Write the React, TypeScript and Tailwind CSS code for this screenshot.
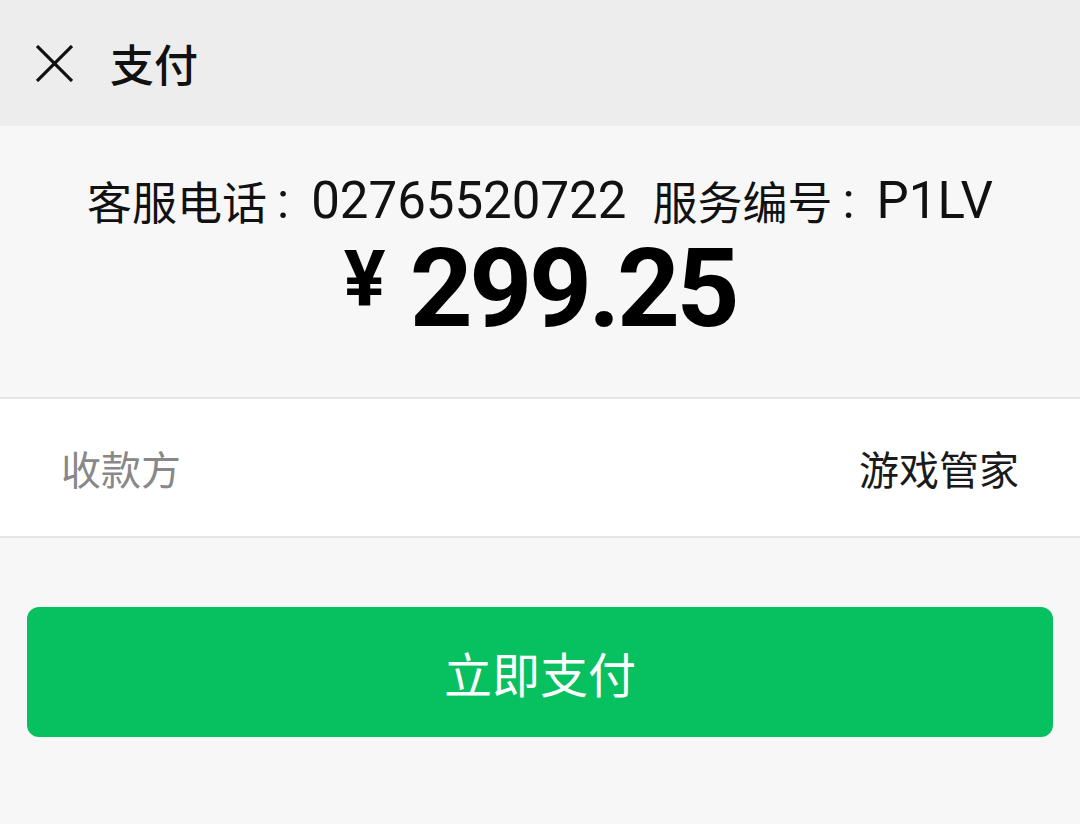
import React from "react";

export default function App() {
  const cjk = { fontFamily: '"Noto Sans CJK SC", "Noto Sans", sans-serif' } as React.CSSProperties;
  const rob = { fontFamily: 'Roboto, "Noto Sans", sans-serif' } as React.CSSProperties;
  return (
    <div className="w-[1080px] h-[824px] bg-[#f7f7f7] flex flex-col" style={cjk}>
      <div className="h-[126px] bg-[#ededed] flex items-center">
        <svg className="ml-[36px] w-[37px] h-[37px]" viewBox="0 0 37 37" fill="none" stroke="#111" strokeWidth="3.2">
          <path d="M1 1L36 36M36 1L1 36" />
        </svg>
        <div className="ml-[37px] text-[44px] leading-none text-[#111] font-medium">支付</div>
      </div>
      <div className="h-[271px] flex flex-col items-center">
        <div className="mt-[42px] h-[66px] flex items-center text-[#111] whitespace-nowrap">
          <span className="text-[45px] leading-[66px]">客服电话</span>
          <span className="text-[50px] leading-[66px] ml-[10px] mr-[22px]" style={rob}>:</span>
          <span className="text-[51px] leading-[66px]" style={rob}>02765520722</span>
          <span className="text-[45px] leading-[66px] ml-[26px]">服务编号</span>
          <span className="text-[50px] leading-[66px] ml-[10px] mr-[22px]" style={rob}>:</span>
          <span className="text-[51px] leading-[66px]" style={rob}>P1LV</span>
        </div>
        <div className="flex items-start text-black font-bold" style={rob}>
          <span className="text-[78px] leading-[76px] mt-[8px] mr-[24px]">¥</span>
          <span className="text-[110px] leading-[110px] tracking-[-3.5px]">299.25</span>
        </div>
      </div>
      <div className="h-[141px] bg-white border-y-2 border-[#e5e5e5] flex items-center justify-between px-[61px]">
        <span className="text-[40px] text-[#888]">收款方</span>
        <span className="text-[40px] text-[#1a1a1a]">游戏管家</span>
      </div>
      <div className="px-[27px] mt-[69px]">
        <div className="h-[130px] rounded-[12px] bg-[#07c160] flex items-center justify-center text-white text-[48px]">
          立即支付
        </div>
      </div>
    </div>
  );
}
